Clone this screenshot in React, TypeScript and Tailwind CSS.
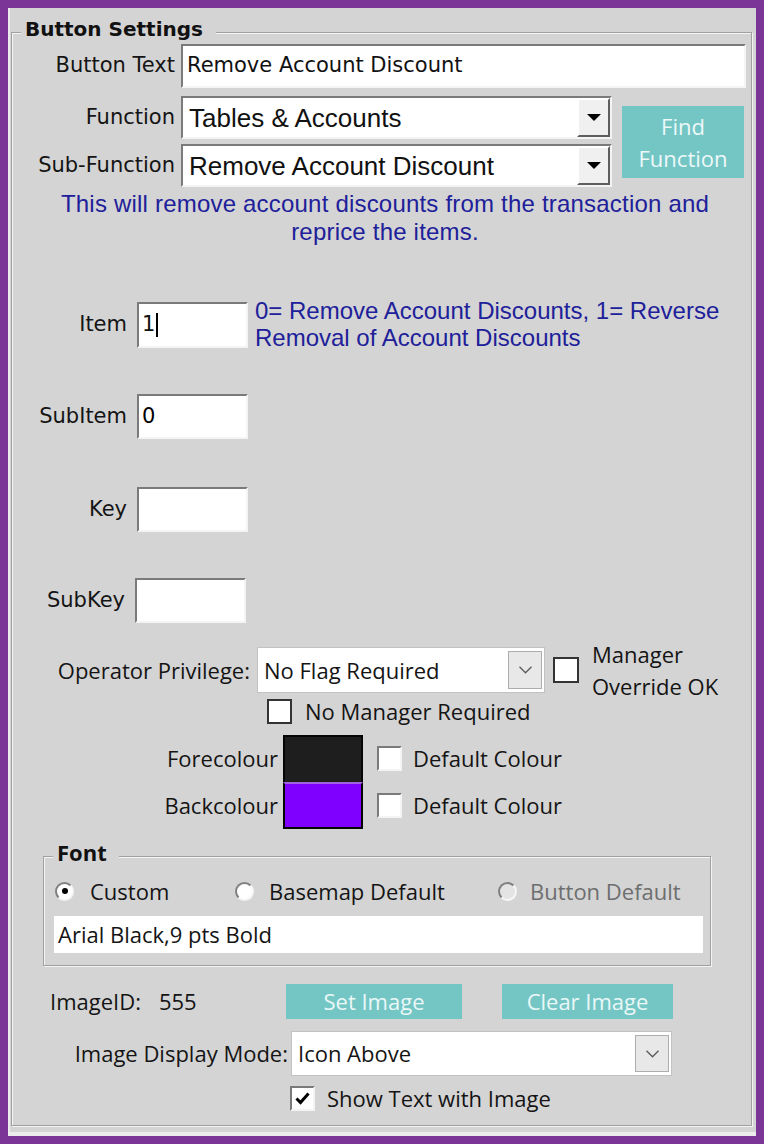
import React from "react";

const tahoma = "font-['DejaVu_Sans',sans-serif]";
const segoe = "font-['Open_Sans',sans-serif]";
const arial = "font-['Liberation_Sans',Arial,sans-serif]";

const sunken =
  "bg-white border-2 border-t-[#7a7a7a] border-l-[#7a7a7a] border-b-[#f4f4f4] border-r-[#f4f4f4]";

function Field({ className = "", children }: { className?: string; children?: React.ReactNode }) {
  return <div className={`flex items-center ${sunken} ${className}`}>{children}</div>;
}

function ClassicSelect({ value, className = "" }: { value: string; className?: string }) {
  return (
    <Field className={className}>
      <span className={`flex-1 pl-[6px] text-[26px] leading-none text-[#111] ${arial}`}>{value}</span>
      <div className="w-[33px] h-full bg-[#f0f0f0] border-2 border-t-white border-l-white border-b-[#5e5e5e] border-r-[#5e5e5e] flex items-center justify-center">
        <svg width="14" height="8" viewBox="0 0 14 8">
          <polygon points="0,0 14,0 7,7" fill="#000" />
        </svg>
      </div>
    </Field>
  );
}

function FlatSelect({ value, className = "" }: { value: string; className?: string }) {
  return (
    <div className={`flex items-center bg-white border border-[#c2c2c2] ${className}`}>
      <span className={`flex-1 pl-[6px] text-[22px] text-[#141414] ${segoe}`}>{value}</span>
      <div className="w-[34px] h-[calc(100%-6px)] mr-[2px] bg-[#e8e8e8] border border-[#adadad] flex items-center justify-center">
        <svg width="13" height="8" viewBox="0 0 13 8">
          <polyline points="0.5,0.8 6.5,6.8 12.5,0.8" fill="none" stroke="#5a5a5a" strokeWidth="1.3" />
        </svg>
      </div>
    </div>
  );
}

function FlatCheck() {
  return <div className="w-[26px] h-[26px] bg-white border-2 border-[#333]" />;
}

function Check3D({ checked = false }: { checked?: boolean }) {
  return (
    <div className={`w-[25px] h-[25px] flex items-center justify-center ${sunken}`}>
      {checked && (
        <svg width="15" height="13" viewBox="0 0 15 13">
          <polyline points="1.5,6.5 5.5,10.5 13.5,1.5" fill="none" stroke="#000" strokeWidth="3" />
        </svg>
      )}
    </div>
  );
}

function Radio({ checked = false, disabled = false }: { checked?: boolean; disabled?: boolean }) {
  return (
    <div
      className={`w-[19px] h-[19px] rounded-full flex items-center justify-center border-2 border-t-[#808080] border-l-[#808080] border-b-[#f6f6f6] border-r-[#f6f6f6] ${
        disabled ? "bg-[#e4e4e4]" : "bg-white"
      }`}
    >
      {checked && <div className="w-[6px] h-[6px] rounded-full bg-black" />}
    </div>
  );
}

function ShortRow({ label, labelW, value, mt, h }: { label: string; labelW: string; value?: React.ReactNode; mt: string; h: string }) {
  return (
    <div className={`flex items-center ${mt}`}>
      <div className={`${labelW} text-right text-[21px] text-[#141414] ${tahoma}`}>{label}</div>
      <Field className={`ml-[10px] w-[111px] ${h} pl-[3px] text-[21px] ${tahoma}`}>{value}</Field>
    </div>
  );
}

export default function App() {
  return (
    <div className="w-[764px] h-[1144px] bg-[#7b3597] p-[8px]">
      <div className="w-[748px] h-[1128px] bg-[#d4d4d4] pt-[24px] pl-[3px] shadow-[inset_2px_0_0_#ececec,inset_0_-4px_0_#ececec]">
        <div className="relative w-[741px] h-[1094px] border border-[#a0a0a0] shadow-[1px_1px_0_#f4f4f4,inset_1px_1px_0_#f4f4f4]">
          <span className={`absolute left-[9px] top-[-16px] bg-[#d4d4d4] pl-[4px] pr-[13px] text-[20px] leading-[24px] font-bold text-[#111] ${tahoma}`}>
            Button Settings
          </span>

          {/* button text */}
          <div className="flex items-center mt-[11px]">
            <div className={`w-[163px] text-right text-[21px] text-[#141414] ${tahoma}`}>Button Text</div>
            <Field className={`ml-[6px] w-[565px] h-[44px] pl-[4px] text-[21px] text-[#111] ${tahoma}`}>Remove Account Discount</Field>
          </div>

          {/* function / sub function */}
          <div className="flex mt-[8px]">
            <div className="flex flex-col gap-[5px]">
              <div className="flex items-center">
                <div className={`w-[163px] text-right text-[21px] text-[#141414] ${tahoma}`}>Function</div>
                <ClassicSelect value="Tables & Accounts" className="ml-[6px] w-[431px] h-[43px]" />
              </div>
              <div className="flex items-center">
                <div className={`w-[163px] text-right text-[21px] text-[#141414] ${tahoma}`}>Sub-Function</div>
                <ClassicSelect value="Remove Account Discount" className="ml-[6px] w-[431px] h-[43px]" />
              </div>
            </div>
            <div className={`ml-[10px] mt-[10px] w-[122px] h-[72px] bg-[#74c6c5] flex flex-col items-center justify-center text-[22px] leading-[32px] text-[#edf8f8] ${segoe}`}>
              <span>Find</span>
              <span>Function</span>
            </div>
          </div>

          <p className={`mt-[3px] pl-[7px] text-center text-[24px] tracking-[0.2px] leading-[28px] text-[#20209a] ${arial}`}>
            This will remove account discounts from the transaction and
            <br />
            reprice the items.
          </p>

          {/* item */}
          <div className="flex items-start h-[46px] mt-[56px]">
            <div className={`w-[115px] h-[46px] flex items-center justify-end text-[21px] text-[#141414] ${tahoma}`}>Item</div>
            <Field className={`ml-[10px] w-[111px] h-[46px] pl-[3px] text-[21px] text-[#111] ${tahoma}`}>
              1<span className="w-[2px] h-[24px] bg-black ml-[1px]" />
            </Field>
            <div className={`ml-[7px] -mt-[5px] text-[24px] leading-[27px] text-[#20209a] ${arial}`}>
              <div>0= Remove Account Discounts, 1= Reverse</div>
              <div>Removal of Account Discounts</div>
            </div>
          </div>

          <ShortRow label="SubItem" labelW="w-[115px]" value="0" mt="mt-[46px]" h="h-[45px]" />
          <ShortRow label="Key" labelW="w-[115px]" mt="mt-[48px]" h="h-[45px]" />
          <ShortRow label="SubKey" labelW="w-[113px]" mt="mt-[46px]" h="h-[45px]" />

          {/* operator privilege */}
          <div className="flex items-center h-[46px] mt-[24px]">
            <div className={`w-[238px] text-right text-[22px] text-[#141414] ${segoe}`}>Operator Privilege:</div>
            <FlatSelect value="No Flag Required" className="ml-[7px] w-[288px] h-[46px]" />
            <div className="ml-[8px]">
              <FlatCheck />
            </div>
            <div className={`ml-[13px] text-[22px] leading-[32px] text-[#141414] ${segoe}`}>
              <div>Manager</div>
              <div>Override OK</div>
            </div>
          </div>

          <div className="flex items-center h-[26px] mt-[5px] pl-[255px]">
            <div className="w-[25px] h-[25px] bg-white border-2 border-[#333]" />
            <span className={`ml-[13px] text-[22px] leading-[26px] text-[#141414] ${segoe}`}>No Manager Required</span>
          </div>

          {/* colours */}
          <div className="flex items-center mt-[11px]">
            <div className={`w-[266px] text-right text-[22px] text-[#141414] ${segoe}`}>Forecolour</div>
            <div className="ml-[5px] w-[80px] h-[47px] bg-[#1e1e1e] border-2 border-b-0 border-[#050505]" />
            <div className="ml-[14px]">
              <Check3D />
            </div>
            <span className={`ml-[11px] text-[22px] text-[#141414] ${segoe}`}>Default Colour</span>
          </div>
          <div className="flex items-center">
            <div className={`w-[266px] text-right text-[22px] text-[#141414] ${segoe}`}>Backcolour</div>
            <div className="ml-[5px] w-[80px] h-[47px] bg-[#8000ff] border-2 border-[#050505] border-t-[#a060e0]" />
            <div className="ml-[14px]">
              <Check3D />
            </div>
            <span className={`ml-[11px] text-[22px] text-[#141414] ${segoe}`}>Default Colour</span>
          </div>

          {/* font group */}
          <div className="relative ml-[31px] mt-[27px] w-[668px] h-[110px] border border-[#a0a0a0] shadow-[1px_1px_0_#f4f4f4,inset_1px_1px_0_#f4f4f4]">
            <span className={`absolute left-[9px] top-[-18px] bg-[#d4d4d4] pl-[4px] pr-[12px] text-[22px] leading-[26px] font-bold text-[#111] ${segoe}`}>
              Font
            </span>
            <div className={`flex items-center mt-[21px] h-[26px] pl-[11px] text-[22px] ${segoe}`}>
              <div className="w-[180px] flex items-center">
                <Radio checked />
                <span className="ml-[16px] text-[#141414]">Custom</span>
              </div>
              <div className="w-[263px] flex items-center">
                <Radio />
                <span className="ml-[15px] text-[#141414]">Basemap Default</span>
              </div>
              <div className="flex items-center">
                <Radio disabled />
                <span className="ml-[13px] text-[#6e6e6e]">Button Default</span>
              </div>
            </div>
            <div className={`mt-[12px] ml-[10px] w-[649px] h-[37px] bg-white flex items-center pl-[4px] text-[22px] text-[#141414] ${segoe}`}>
              Arial Black,9 pts Bold
            </div>
          </div>

          {/* image */}
          <div className={`flex items-center h-[35px] mt-[18px] text-[22px] ${segoe}`}>
            <div className="w-[274px] pl-[38px] text-[#141414]">
              ImageID:<span className="ml-[18px]">555</span>
            </div>
            <div className="w-[176px] h-[35px] bg-[#74c6c5] flex items-center justify-center text-[#eaf7f7]">Set Image</div>
            <div className="ml-[40px] w-[171px] h-[35px] bg-[#74c6c5] flex items-center justify-center text-[#eaf7f7]">Clear Image</div>
          </div>

          <div className="flex items-center h-[45px] mt-[12px]">
            <div className={`w-[276px] text-right text-[22px] text-[#141414] ${segoe}`}>Image Display Mode:</div>
            <FlatSelect value="Icon Above" className="ml-[3px] w-[381px] h-[45px]" />
          </div>

          <div className="flex items-center h-[26px] mt-[9px] pl-[278px]">
            <Check3D checked />
            <span className={`ml-[12px] text-[22px] leading-[26px] text-[#141414] ${segoe}`}>Show Text with Image</span>
          </div>
        </div>
      </div>
    </div>
  );
}
